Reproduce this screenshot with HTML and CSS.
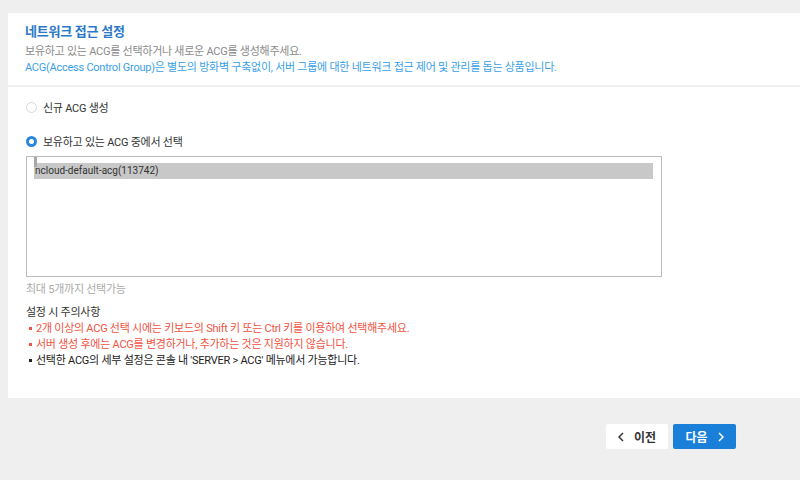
FILE: index.html
```html
<!DOCTYPE html>
<html lang="ko">
<head>
  <meta charset="UTF-8">
  <title>네트워크 접근 설정</title>
  <link rel="stylesheet" href="styles.css">
</head>
<body>
<div class="card">
  <div class="card-head">
    <h2 class="title">네트워크 접근 설정</h2>
    <p class="desc">보유하고 있는 ACG를 선택하거나 새로운 ACG를 생성해주세요.</p>
    <p class="desc blue">ACG(Access Control Group)은 별도의 방화벽 구축없이, 서버 그룹에 대한 네트워크 접근 제어 및 관리를 돕는 상품입니다.</p>
  </div>
  <div class="card-body">
    <label class="radio-row">
      <span class="radio"></span>
      <span>신규 ACG 생성</span>
    </label>
    <label class="radio-row second">
      <span class="radio on"></span>
      <span>보유하고 있는 ACG 중에서 선택</span>
    </label>
    <div class="listbox">
      <div class="option selected">ncloud-default-acg(113742)</div>
    </div>
    <p class="hint">최대 5개까지 선택가능</p>
    <div class="notes">
      <p class="notes-title">설정 시 주의사항</p>
      <ul>
        <li class="red">2개 이상의 ACG 선택 시에는 키보드의 Shift 키 또는 Ctrl 키를 이용하여 선택해주세요.</li>
        <li class="red">서버 생성 후에는 ACG를 변경하거나, 추가하는 것은 지원하지 않습니다.</li>
        <li>선택한 ACG의 세부 설정은 콘솔 내 'SERVER &gt; ACG' 메뉴에서 가능합니다.</li>
      </ul>
    </div>
  </div>
</div>
<div class="actions">
  <button class="btn prev">
    <svg class="chev" width="6" height="10" viewBox="0 0 6 10"><polyline points="5,1 1,5 5,9" fill="none" stroke="currentColor" stroke-width="1.5"/></svg>
    이전
  </button>
  <button class="btn next">
    다음
    <svg class="chev" width="6" height="10" viewBox="0 0 6 10"><polyline points="1,1 5,5 1,9" fill="none" stroke="currentColor" stroke-width="1.5"/></svg>
  </button>
</div>
</body>
</html>
```

FILE: styles.css
```css
body {
  margin: 0;
  background: #efefef;
  font-family: Roboto, "Noto Sans CJK KR", sans-serif;
  font-size: 11px;
  letter-spacing: -0.25px;
  color: #333;
}
p, h2, ul {
  margin: 0;
}

.card {
  margin: 13px 0 0 8px;
  background: #fff;
}
.card-head {
  padding: 10px 17px 9px;
  border-bottom: 2px solid #f0f0f0;
}
.title {
  font-size: 13px;
  line-height: 18px;
  font-weight: bold;
  color: #2b78c9;
  margin-bottom: 3px;
}
.desc {
  line-height: 16px;
  color: #8a8a8a;
}
.desc.blue {
  color: #3a9fe6;
}

.card-body {
  padding: 11px 18px 29px;
}
.radio-row {
  display: flex;
  align-items: center;
  gap: 6px;
  height: 18px;
  color: #333;
}
.radio-row.second {
  margin-top: 16px;
}
.radio {
  width: 11px;
  height: 11px;
  box-sizing: border-box;
  border-radius: 50%;
  border: 1px solid #d6d6d6;
  background: #fff;
}
.radio.on {
  border: 3px solid #2b86dc;
}

.listbox {
  margin-top: 6px;
  width: 636px;
  height: 121px;
  box-sizing: border-box;
  border: 1px solid #bbb;
  padding: 6px 8px 0 7px;
}
.option {
  position: relative;
  height: 16px;
  line-height: 16px;
  padding-left: 1px;
  font-size: 10px;
  letter-spacing: 0;
  color: #333;
}
.option.selected {
  background: #c8c8c8;
}
.option.selected::before {
  content: "";
  position: absolute;
  left: 0;
  top: -6px;
  width: 3px;
  height: 10px;
  background: #a8a8a8;
}

.hint {
  margin-top: 5px;
  line-height: 16px;
  color: #aaa;
}
.notes {
  margin-top: 7px;
}
.notes-title {
  line-height: 16px;
  color: #333;
}
.notes ul {
  list-style: none;
  padding: 0 0 0 3px;
}
.notes li {
  line-height: 16px;
  color: #222;
}
.notes li::before {
  content: "";
  display: inline-block;
  width: 3px;
  height: 3px;
  margin: 0 4px 2px 0;
  vertical-align: middle;
  background: currentColor;
}
.notes li.red {
  color: #f0533f;
}

.actions {
  display: flex;
  justify-content: flex-end;
  gap: 5px;
  margin: 26px 64px 0 0;
}
.btn {
  height: 25px;
  border: none;
  border-radius: 2px;
  font-family: Roboto, "Noto Sans CJK KR", sans-serif;
  font-size: 12px;
  font-weight: bold;
  display: flex;
  align-items: center;
  justify-content: center;
  gap: 10px;
  padding: 0;
}
.btn.prev {
  width: 62px;
  background: #fff;
  color: #333;
}
.btn.next {
  width: 63px;
  background: #1a7fd8;
  color: #fff;
}
```
